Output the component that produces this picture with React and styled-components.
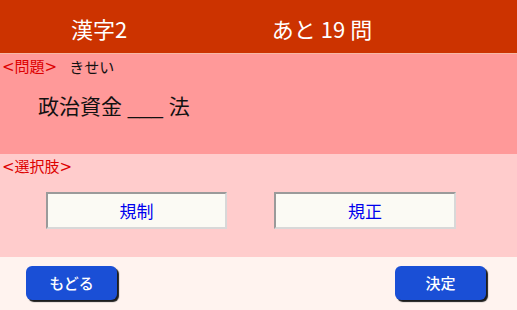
import React from 'react';
import styled, { createGlobalStyle } from 'styled-components';

const GlobalStyle = createGlobalStyle`
  html, body {
    margin: 0;
    padding: 0;
    width: 517px;
    height: 310px;
    overflow: hidden;
  }
  body {
    font-family: "Noto Sans CJK JP", "Noto Sans", sans-serif;
  }
`;

const Screen = styled.div`
  width: 517px;
  height: 310px;
  display: flex;
  flex-direction: column;
  background: #fff3ef;
`;

const Header = styled.header`
  height: 53px;
  flex: none;
  display: grid;
  grid-template-columns: 198px 248px;
  align-items: center;
  background: #cc3300;
  border-bottom: 1px solid #f6b8a6;
  color: #fff;
  font-size: 22px;
  line-height: 1;
`;

const HeaderText = styled.div`
  text-align: center;
  padding-top: 2px;
`;

const Section = styled.section`
  flex: none;
  height: ${p => p.$h}px;
  background: ${p => p.$bg};
  display: flex;
  flex-direction: column;
`;

const LabelRow = styled.div`
  display: flex;
  align-items: center;
  gap: 12px;
  padding: 3px 0 0 2px;
  height: 20px;
  font-size: 15px;
  line-height: 20px;
`;

const Label = styled.span`
  color: #dd0000;
  font-family: "DejaVu Sans", "Noto Sans CJK JP", sans-serif;
`;

const Reading = styled.span`
  color: #111;
`;

const Question = styled.div`
  padding: 15px 0 0 38px;
  font-family: "Liberation Sans", "Noto Sans CJK JP", sans-serif;
  font-size: 21px;
  line-height: 30px;
  color: #111;
  white-space: pre;
`;

const Choices = styled.div`
  display: grid;
  grid-template-columns: 181px 182px;
  gap: 47px;
  padding: 15px 0 0 46px;
`;

const ChoiceBox = styled.button`
  height: 37px;
  box-sizing: border-box;
  margin: 0;
  padding: 0;
  background: #fbfaf4;
  border-style: solid;
  border-width: 2px;
  border-color: #9a9a9a #d8d8d8 #d8d8d8 #9a9a9a;
  color: #0000ee;
  font-family: inherit;
  font-size: 17px;
  line-height: 1;
`;

const Footer = styled.footer`
  flex: 1;
  display: flex;
  align-items: center;
  justify-content: space-between;
  padding: 0 31px 0 26px;
`;

const ActionButton = styled.button`
  width: 91px;
  height: 34px;
  margin: 0 0 2px 0;
  border: none;
  border-radius: 6px;
  background: #1a4fd6;
  box-shadow: 2px 2px 1px #1c1c1c;
  color: #fff;
  font-family: inherit;
  font-size: 15px;
  font-weight: 500;
  line-height: 1;
`;

export default function App() {
  return (
    <>
      <GlobalStyle />
      <Screen>
        <Header>
          <HeaderText>漢字2</HeaderText>
          <HeaderText>あと 19 問</HeaderText>
        </Header>
        <Section $h={100} $bg="#ff9999">
          <LabelRow>
            <Label>&lt;問題&gt;</Label>
            <Reading>きせい</Reading>
          </LabelRow>
          <Question>政治資金 ___ 法</Question>
        </Section>
        <Section $h={103} $bg="#ffcccc">
          <LabelRow>
            <Label>&lt;選択肢&gt;</Label>
          </LabelRow>
          <Choices>
            <ChoiceBox>規制</ChoiceBox>
            <ChoiceBox>規正</ChoiceBox>
          </Choices>
        </Section>
        <Footer>
          <ActionButton>もどる</ActionButton>
          <ActionButton>決定</ActionButton>
        </Footer>
      </Screen>
    </>
  );
}
